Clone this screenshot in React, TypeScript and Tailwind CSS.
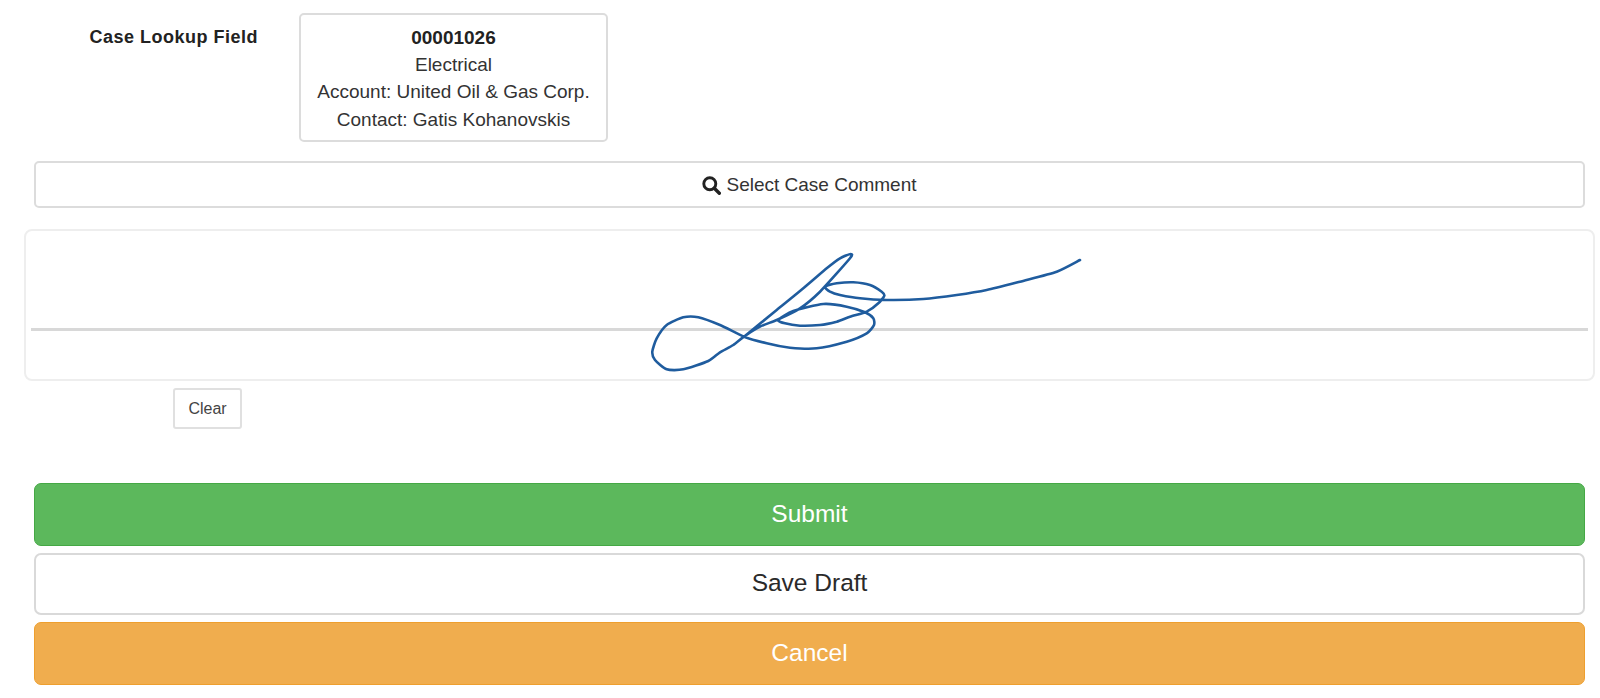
// traced from the reference, in 3x crop coordinates
const signature: [number, number][] = [
    [1380, 75], [1310, 110], [1200, 140], [1100, 165], [1010, 180], [910, 192], [800, 195], [720, 190], [660, 180],
    [630, 170], [615, 155], [650, 145], [700, 142], [750, 150], [785, 170], [793, 182], [775, 205], [740, 230],
    [690, 245], [650, 260], [600, 270], [540, 272], [495, 265], [475, 255], [520, 228], [610, 207], [680, 215],
    [735, 232], [760, 250], [762, 270], [740, 295], [680, 320], [590, 340], [510, 338], [440, 325], [372, 305],
    [300, 270], [235, 247], [190, 247], [140, 270], [110, 310], [97, 350], [105, 375], [140, 403], [190, 403],
    [265, 378], [300, 352], [340, 330], [372, 305], [420, 275], [470, 255], [540, 220], [600, 170], [690, 70],
    [692, 57], [660, 70], [620, 100], [550, 160], [470, 225], [372, 305],
];

// crop origin is (620,235), the box starts at (24,229)
const pts = signature.map(([x, y]) => [x / 3 + 596, y / 3 + 6]);

// catmull-rom through the traced points so the pen line stays round
function smoothPath(p: number[][]) {
    let d = `M${p[0][0].toFixed(1)} ${p[0][1].toFixed(1)}`;
    for (let i = 0; i < p.length - 1; i++) {
        const a = p[Math.max(i - 1, 0)];
        const b = p[i];
        const c = p[i + 1];
        const e = p[Math.min(i + 2, p.length - 1)];
        const c1x = b[0] + (c[0] - a[0]) / 9;
        const c1y = b[1] + (c[1] - a[1]) / 9;
        const c2x = c[0] - (e[0] - b[0]) / 9;
        const c2y = c[1] - (e[1] - b[1]) / 9;
        d += ` C${c1x.toFixed(1)} ${c1y.toFixed(1)} ${c2x.toFixed(1)} ${c2y.toFixed(1)} ${c[0].toFixed(1)} ${c[1].toFixed(1)}`;
    }
    return d;
}

export default function App() {
    return (
        <div className="h-[698px] overflow-hidden bg-white px-[34px] pt-[13px] font-['Liberation_Sans',Arial,sans-serif] text-[#333]">
            <div className="flex items-start">
                <div className="w-[224px] pt-[13px] text-right text-[18px] leading-[22px] font-bold tracking-[0.5px] text-[#222]">
                    Case Lookup Field
                </div>
                <div className="ml-[41px] h-[129px] w-[309px] rounded-[5px] border-2 border-[#dcdcdc] pt-[8.5px] text-center text-[19px] leading-[27.4px]">
                    <div className="font-bold text-[#222]">00001026</div>
                    <div>Electrical</div>
                    <div>Account: United Oil &amp; Gas Corp.</div>
                    <div>Contact: Gatis Kohanovskis</div>
                </div>
            </div>

            <button className="mt-[19px] flex h-[47px] w-[1551px] items-center justify-center gap-[5px] rounded-[5px] border-2 border-[#dcdcdc] bg-white pt-[1px] text-[19px] text-[#333]">
                <svg width="19" height="19" viewBox="0 0 19 19" fill="none" stroke="#222">
                    <circle cx="7.8" cy="7.8" r="6" strokeWidth="2.9" />
                    <path d="M12.3 12.3 17.3 17.3" strokeWidth="3.4" strokeLinecap="round" />
                </svg>
                Select Case Comment
            </button>

            <div className="relative mt-[21px] -ml-[10px] h-[152px] w-[1571px] rounded-[8px] border-2 border-[#eee]">
                <svg className="absolute -top-[2px] -left-[2px]" width="1571" height="152" fill="none">
                    <line x1="7" y1="100.5" x2="1564" y2="100.5" stroke="#d8d8d8" strokeWidth="3" />
                    <path d={smoothPath(pts)} stroke="#1f5c9e" strokeWidth="2.6" strokeLinejoin="round" strokeLinecap="round" />
                </svg>
            </div>

            <button className="mt-[7px] ml-[139px] block h-[41px] w-[69px] rounded-[3px] border-2 border-[#e0e0e0] bg-white text-[16px] text-[#444]">
                Clear
            </button>

            <div className="mt-[54px] flex w-[1551px] flex-col gap-[7px] text-[24.5px]">
                <button className="h-[62.5px] rounded-[7px] border border-[#45a845] bg-[#5cb85c] text-white">Submit</button>
                <button className="h-[62.5px] rounded-[7px] border-2 border-[#d9d9d9] bg-white text-[#2a2a2a]">Save Draft</button>
                <button className="h-[62.5px] rounded-[7px] border border-[#ee9f2e] bg-[#f0ad4e] text-white">Cancel</button>
            </div>
        </div>
    );
}
